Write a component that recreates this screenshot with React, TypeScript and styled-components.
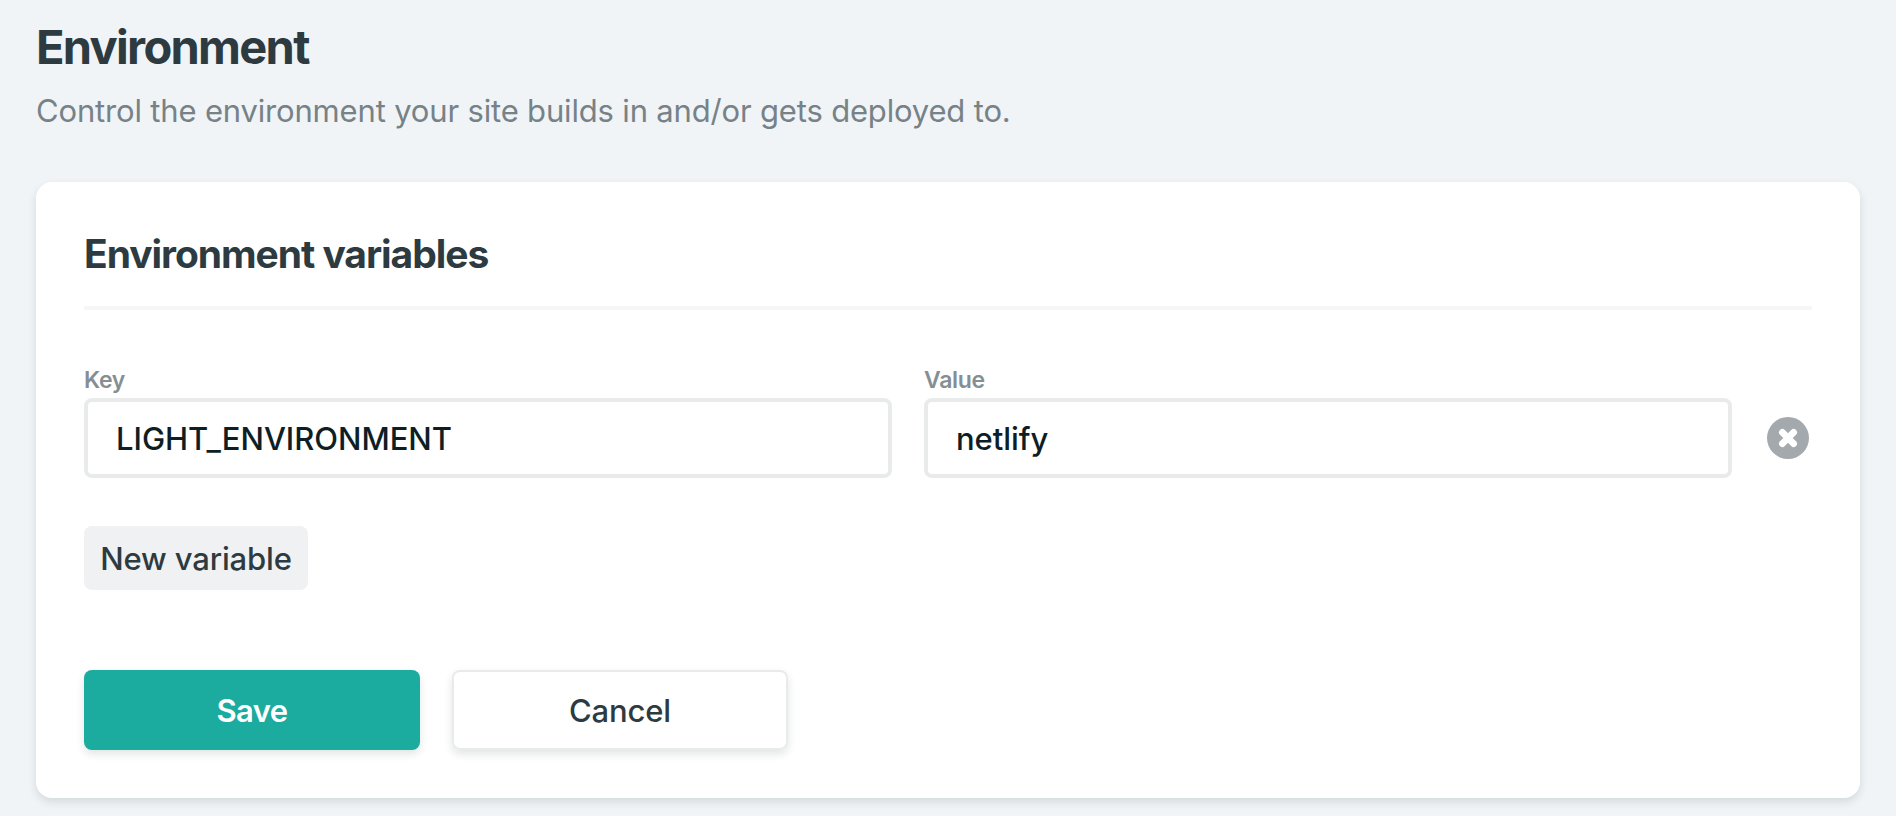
import React from "react";
import styled, { createGlobalStyle, css } from "styled-components";

const GlobalStyle = createGlobalStyle`
  * { box-sizing: border-box; }
  body {
    margin: 0;
    min-height: 100vh;
    background: #f0f4f7;
    color: #2d3b41;
    font-family: Inter, "Liberation Sans", sans-serif;
  }
`;

const Page = styled.main`
  display: flex;
  flex-direction: column;
  height: 816px;
  padding: 18px 36px;
  overflow: hidden;
`;

const Title = styled.h1`
  margin: 0 0 12px;
  font-size: 47px;
  font-weight: 700;
  line-height: 57px;
  letter-spacing: -1.7px;
`;

const Subtitle = styled.p`
  margin: 0 0 48px;
  color: #778287;
  font-size: 31px;
  line-height: 47px;
  letter-spacing: -0.17px;
`;

const Card = styled.section`
  flex: none;
  padding: 48px;
  border-radius: 16px;
  background: #fff;
  box-shadow: 0 4px 8px rgba(14, 30, 37, 0.12);
`;

const CardTitle = styled.h2`
  margin: 0 0 56px;
  padding-bottom: 29px;
  border-bottom: 4px solid #f5f6f8;
  font-size: 39px;
  font-weight: 700;
  line-height: 47px;
  letter-spacing: -1.05px;
`;

const VariableRow = styled.div`
  display: flex;
  align-items: flex-end;
  gap: 32px;
`;

const Field = styled.label`
  display: flex;
  flex: none;
  flex-direction: column;
  gap: 4px;
  width: 808px;
`;

const FieldLabel = styled.span`
  color: #858f93;
  font-size: 23px;
  font-weight: 600;
  line-height: 28px;
  letter-spacing: -0.3px;
`;

const Input = styled.input`
  height: 80px;
  padding: 18px 28px 17px;
  border: 4px solid #e9ebeb;
  border-radius: 8px;
  background: #fff;
  color: #0e1e25;
  font: 500 31px/37px Inter, "Liberation Sans", sans-serif;
  letter-spacing: -0.04px;
`;

const RemoveButton = styled.button`
  display: flex;
  align-items: center;
  justify-content: center;
  width: 48px;
  height: 80px;
  padding: 0;
  border: 0;
  background: none;
`;

const buttonText = css`
  font: 500 31px/37px Inter, "Liberation Sans", sans-serif;
  color: #2d3b41;
  border: 0;
  border-radius: 8px;
`;

const NewVariableButton = styled.button`
  ${buttonText}
  display: block;
  width: 224px;
  height: 64px;
  margin: 48px 0 80px;
  padding: 14px 16px 13px;
  background: #f0f1f3;
  letter-spacing: -0.16px;
  white-space: nowrap;
`;

const Actions = styled.div`
  display: flex;
  gap: 32px;
`;

const ActionButton = styled.button<{ $primary?: boolean }>`
  ${buttonText}
  width: 336px;
  height: 80px;
  padding: 22px 0 21px;
  background: #fff;
  letter-spacing: -0.15px;
  box-shadow: inset 0 0 0 2px #e9ebeb, 0 4px 8px rgba(14, 30, 37, 0.12);
  ${({ $primary }) =>
    $primary &&
    css`
      background: #1bab9f;
      color: #fff;
      font-weight: 600;
      letter-spacing: -0.6px;
      box-shadow: 0 4px 8px rgba(14, 30, 37, 0.12);
    `}
`;

const RemoveIcon = () => (
  <svg width="42" height="42" viewBox="0 0 42 42" aria-hidden="true">
    <circle cx="21" cy="21" r="21" fill="#a3a9ad" />
    <path d="M15.4 15.4L26.6 26.6M26.6 15.4L15.4 26.6" stroke="#fff" strokeWidth="6.8" strokeLinecap="round" />
  </svg>
);

export default function App() {
  return (
    <Page>
      <GlobalStyle />
      <Title>Environment</Title>
      <Subtitle>Control the environment your site builds in and/or gets deployed to.</Subtitle>
      <Card>
        <CardTitle>Environment variables</CardTitle>
        <VariableRow>
          <Field>
            <FieldLabel>Key</FieldLabel>
            <Input defaultValue="LIGHT_ENVIRONMENT" spellCheck={false} />
          </Field>
          <Field>
            <FieldLabel>Value</FieldLabel>
            <Input defaultValue="netlify" spellCheck={false} />
          </Field>
          <RemoveButton aria-label="Remove variable">
            <RemoveIcon />
          </RemoveButton>
        </VariableRow>
        <NewVariableButton>New variable</NewVariableButton>
        <Actions>
          <ActionButton $primary>Save</ActionButton>
          <ActionButton>Cancel</ActionButton>
        </Actions>
      </Card>
    </Page>
  );
}
